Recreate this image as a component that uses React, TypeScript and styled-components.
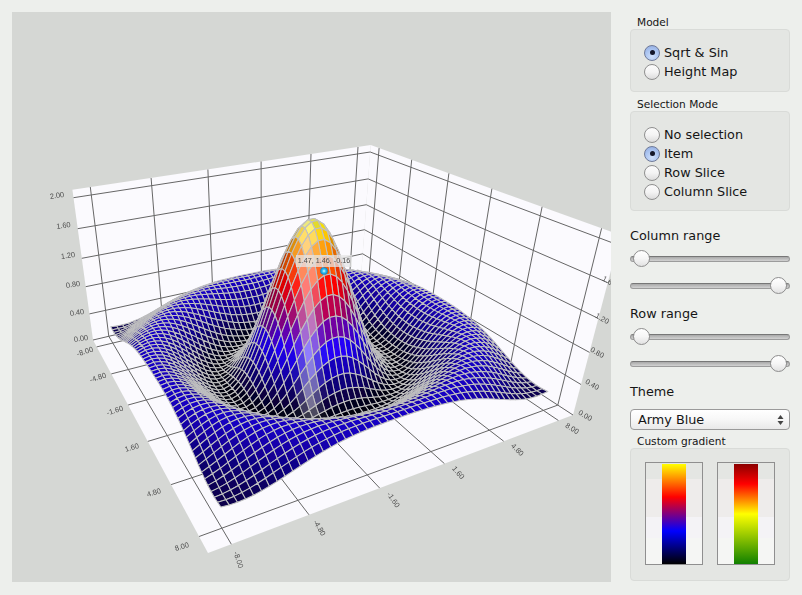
import * as React from 'react';
import styled, { createGlobalStyle } from 'styled-components';

const { useMemo } = React;

const GlobalStyle = createGlobalStyle`
  html, body {
    margin: 0;
    padding: 0;
    background: #edefec;
  }
  body {
    font-family: "DejaVu Sans", "Liberation Sans", sans-serif;
    color: #151515;
  }
`;

const Page = styled.div`
  width: 802px;
  height: 595px;
  box-sizing: border-box;
  padding: 12px 12px 13px 12px;
  display: flex;
  gap: 19px;
  background: #edefec;
  overflow: hidden;
`;

const ChartPanel = styled.div`
  width: 599px;
  height: 570px;
  background: #d5d7d4;
  overflow: hidden;
  svg {
    display: block;
  }
`;

const Side = styled.div`
  width: 160px;
  margin-top: 3px;
  display: flex;
  flex-direction: column;
`;

const GroupTitle = styled.div<{ $gap?: number }>`
  font-size: 10.6px;
  line-height: 14px;
  height: 14px;
  padding-left: 7px;
  margin-top: ${(p) => p.$gap ?? 0}px;
  white-space: nowrap;
`;

const GroupBox = styled.div<{ $height: number }>`
  height: ${(p) => p.$height}px;
  box-sizing: border-box;
  padding-top: 13px;
  background: #e4e6e3;
  border: 1px solid #d9dbd8;
  border-radius: 4px;
`;

const RadioRow = styled.div`
  height: 19px;
  padding-left: 13px;
  display: flex;
  align-items: center;
  gap: 4px;
  font-size: 12.8px;
  white-space: nowrap;
`;

const RadioDot = styled.span<{ $checked?: boolean }>`
  width: 16px;
  height: 16px;
  box-sizing: border-box;
  border-radius: 50%;
  display: flex;
  align-items: center;
  justify-content: center;
  border: 1px solid ${(p) => (p.$checked ? '#6f7a99' : '#8f8f8f')};
  background: ${(p) =>
    p.$checked
      ? 'radial-gradient(circle at 50% 75%, #cfe0fb 0%, #a9c3f0 55%, #8ea8dc 100%)'
      : 'linear-gradient(#fbfbfb 0%, #f4f4f4 50%, #dcdcdc 100%)'};
  &::after {
    content: '';
    display: ${(p) => (p.$checked ? 'block' : 'none')};
    width: 5px;
    height: 5px;
    border-radius: 50%;
    background: #14172a;
  }
`;

const SectionLabel = styled.div<{ $gap: number }>`
  font-size: 12.8px;
  line-height: 16px;
  height: 16px;
  margin-top: ${(p) => p.$gap}px;
  white-space: nowrap;
`;

const Slider = styled.div<{ $end?: boolean; $gap: number }>`
  position: relative;
  height: 16px;
  margin-top: ${(p) => p.$gap}px;
  padding: 0 3px;
  display: flex;
  justify-content: ${(p) => (p.$end ? 'flex-end' : 'flex-start')};
`;

const Track = styled.div`
  position: absolute;
  left: 0;
  right: 0;
  top: 5px;
  height: 6px;
  box-sizing: border-box;
  border-radius: 3px;
  border: 1px solid #9c9c9c;
  border-top-color: #777;
  background: linear-gradient(#a9a9a9, #d2d2d2);
`;

const Handle = styled.div`
  position: relative;
  width: 17px;
  height: 17px;
  margin-top: -1px;
  box-sizing: border-box;
  border-radius: 50%;
  border: 1px solid #8d8d8d;
  background: linear-gradient(#ffffff 0%, #f6f6f6 50%, #e2e2e2 100%);
`;

const Select = styled.div`
  height: 21px;
  margin-top: 9px;
  box-sizing: border-box;
  padding: 0 5px 0 7px;
  display: flex;
  align-items: center;
  justify-content: space-between;
  font-size: 12.8px;
  border: 1px solid #9a9a9a;
  border-radius: 4px;
  background: linear-gradient(#ffffff 0%, #f7f7f7 50%, #e9e9e9 100%);
`;

const GradientBox = styled.div`
  height: 133px;
  box-sizing: border-box;
  padding: 13px 14px;
  display: flex;
  gap: 14px;
  background: #e4e6e3;
  border: 1px solid #d9dbd8;
  border-radius: 4px;
`;

const Swatch = styled.div`
  width: 58px;
  height: 103px;
  box-sizing: border-box;
  padding-top: 1px;
  display: flex;
  justify-content: center;
  border: 1px solid #8f8f8f;
  background: linear-gradient(
    #e4e6e3 0,
    #e4e6e3 16px,
    #eeeceb 16px,
    #eeeceb 54px,
    #f4f3f6 54px,
    #f4f3f6 75px,
    #f5f6f4 75px
  );
`;

const SwatchBar = styled.div<{ $stops: string }>`
  width: 24px;
  height: 100px;
  background: linear-gradient(${(p) => p.$stops});
`;

const AxisLabel = styled.text`
  font-family: "Liberation Sans", sans-serif;
  font-size: 7.4px;
  fill: #4c4c4c;
  text-anchor: middle;
  dominant-baseline: middle;
`;

const TipText = styled.text`
  font-family: "Liberation Sans", sans-serif;
  font-size: 7.2px;
  fill: #4a4a4a;
  text-anchor: middle;
  dominant-baseline: middle;
`;

// plate corners on screen (back, right, front, left), data runs -8..8 inside +-M
const M = 8.9;
const corners = [
  [361, 277],
  [573, 415],
  [208, 553],
  [93, 340],
];
const VP = [264.4, 1589];
const K = -0.0435;

const den =
  (corners[1][0] - corners[2][0]) * (corners[3][1] - corners[2][1]) -
  (corners[3][0] - corners[2][0]) * (corners[1][1] - corners[2][1]);
const sx = corners[0][0] - corners[1][0] + corners[2][0] - corners[3][0];
const sy = corners[0][1] - corners[1][1] + corners[2][1] - corners[3][1];
const g =
  (sx * (corners[3][1] - corners[2][1]) - (corners[3][0] - corners[2][0]) * sy) / den;
const h =
  ((corners[1][0] - corners[2][0]) * sy - sx * (corners[1][1] - corners[2][1])) / den;

function homog(a: number, b: number, z: number) {
  const s = (a + M) / (2 * M);
  const t = (b + M) / (2 * M);
  const [p0, p1, , p3] = corners;
  const x = (p1[0] - p0[0] + g * p1[0]) * s + (p3[0] - p0[0] + h * p3[0]) * t + p0[0];
  const y = (p1[1] - p0[1] + g * p1[1]) * s + (p3[1] - p0[1] + h * p3[1]) * t + p0[1];
  const w = g * s + h * t + 1;
  const l = z * K;
  return [x + l * VP[0], y + l * VP[1], w + l];
}

function project(a: number, b: number, z: number) {
  const [x, y, w] = homog(a, b, z);
  return [x / w, y / w];
}

const pt = (p: number[]) => `${p[0].toFixed(1)} ${p[1].toFixed(1)}`;

function height(a: number, b: number) {
  const r = Math.sqrt(a * a + b * b) + 0.01;
  return (Math.sin(r) / r + 0.24) * 1.61;
}

const STOPS: [number, number[]][] = [
  [0, [0, 0, 0]],
  [0.33, [0, 0, 255]],
  [0.67, [255, 0, 0]],
  [1, [255, 255, 0]],
];

function gradientAt(v: number) {
  for (let i = 1; i < STOPS.length; i++) {
    if (v <= STOPS[i][0]) {
      const [p0, c0] = STOPS[i - 1];
      const [p1, c1] = STOPS[i];
      const f = (v - p0) / (p1 - p0);
      return c0.map((c, n) => c + (c1[n] - c) * f);
    }
  }
  return STOPS[3][1];
}

const LIGHT = [0.56, 0.23, 0.8];

function shade(a: number, b: number) {
  const e = 0.05;
  const dza = ((height(a + e, b) - height(a - e, b)) / (2 * e)) * 3.5;
  const dzb = ((height(a, b + e) - height(a, b - e)) / (2 * e)) * 3.5;
  const n = Math.hypot(dza, dzb, 1);
  const dot = Math.max(0, (-dza * LIGHT[0] - dzb * LIGHT[1] + LIGHT[2]) / n);
  const base = gradientAt(Math.max(0, Math.min(1, height(a, b) / 2)));
  const diffuse = 0.4 + 0.6 * Math.min(1, dot * 1.25) - (n < 1.3 ? 0.14 : 0);

  // the bright band running down the front of the peak
  const r = Math.hypot(a, b);
  const perp = a * 0.375 - b * 0.927 + 0.3;
  const along = a * 0.927 + b * 0.375;
  const fade = Math.max(0, Math.min(1, (4.7 - r) / 1.2));
  const band = along > -0.6 ? Math.exp(-((perp / 0.42) ** 2)) * fade * 0.5 : 0;

  const tint = (c: number) => {
    const lit = c * diffuse;
    return Math.round(Math.min(255, lit + (255 - lit) * band));
  };
  return `rgb(${tint(base[0] + base[2] * 0.12)},${tint(base[1])},${tint(base[2])})`;
}

const TICKS = [-8, -4.8, -1.6, 1.6, 4.8, 8];
const LEVELS = [0, 0.4, 0.8, 1.2, 1.6, 2];
const WALL_TOP = 2.1;
const SAMPLES = 50;

const labels: [string, number, number, number][] = [
  ['2.00', 57, 196, -8],
  ['1.60', 63.5, 226, -8],
  ['1.20', 68, 256, -8],
  ['0.80', 73, 285, -8],
  ['0.40', 77, 313, -8],
  ['0.00', 81, 339, -8],
  ['-8.00', 85, 352, -18],
  ['-4.80', 98, 378, -18],
  ['-1.60', 115, 411, -18],
  ['1.60', 132, 448, -18],
  ['4.80', 154, 493, -18],
  ['8.00', 182, 547, -18],
  ['-8.00', 238, 560, 72],
  ['-4.80', 319, 528, 60],
  ['-1.60', 393, 500, 55],
  ['1.60', 458, 473, 50],
  ['4.80', 517, 450, 45],
  ['8.00', 572, 429, 32],
  ['0.00', 585, 416, 30],
  ['0.40', 592, 385, 30],
  ['0.80', 597, 353, 30],
  ['1.20', 602, 319, 30],
  ['1.60', 609, 282, 30],
];

const SurfaceChart: React.FC = () => {
  const quads = useMemo(() => {
    const step = 16 / (SAMPLES - 1);
    const list: { d: string; fill: string; depth: number }[] = [];
    for (let i = 0; i < SAMPLES - 1; i++) {
      for (let j = 0; j < SAMPLES - 1; j++) {
        const a0 = -8 + i * step;
        const b0 = -8 + j * step;
        const a1 = a0 + step;
        const b1 = b0 + step;
        const ca = a0 + step / 2;
        const cb = b0 + step / 2;
        const d = [
          project(a0, b0, height(a0, b0)),
          project(a1, b0, height(a1, b0)),
          project(a1, b1, height(a1, b1)),
          project(a0, b1, height(a0, b1)),
        ];
        list.push({
          d: `M${d.map(pt).join('L')}Z`,
          fill: shade(ca, cb),
          depth: homog(ca, cb, 0)[2],
        });
      }
    }
    return list.sort((x, y) => y.depth - x.depth);
  }, []);

  const line = (p: number[], q: number[]) => `M${pt(p)}L${pt(q)}`;
  const poly = (pts: number[][]) => `M${pts.map(pt).join('L')}Z`;

  const grid = [
    ...TICKS.map((t) => line(project(t, -M, 0), project(t, M, 0))),
    ...TICKS.map((t) => line(project(-M, t, 0), project(M, t, 0))),
    ...TICKS.map((t) => line(project(-M, t, 0), project(-M, t, WALL_TOP))),
    ...TICKS.map((t) => line(project(t, -M, 0), project(t, -M, WALL_TOP))),
    ...LEVELS.map((z) => line(project(-M, -M, z), project(-M, M, z))),
    ...LEVELS.map((z) => line(project(-M, -M, z), project(M, -M, z))),
  ].join('');

  return (
    <svg width="599" height="570" viewBox="12 12 599 570">
      <defs>
        <filter id="soft" x="-5%" y="-5%" width="110%" height="110%">
          <feGaussianBlur stdDeviation="0.3" />
        </filter>
        <filter id="softer" x="-20%" y="-20%" width="140%" height="140%">
          <feGaussianBlur stdDeviation="0.4" />
        </filter>
        <radialGradient id="marker">
          <stop offset="0%" stopColor="#e8fbff" />
          <stop offset="45%" stopColor="#35c4f5" />
          <stop offset="100%" stopColor="#0a7fc4" />
        </radialGradient>
      </defs>
      <g filter="url(#soft)">
        <g fill="#fbfafe">
          <path d={poly([project(-M, -M, 0), project(-M, M, 0), project(-M, M, WALL_TOP), project(-M, -M, WALL_TOP)])} />
          <path d={poly([project(-M, -M, 0), project(M, -M, 0), project(M, -M, WALL_TOP), project(-M, -M, WALL_TOP)])} />
          <path d={poly([project(-M, -M, 0), project(M, -M, 0), project(M, M, 0), project(-M, M, 0)])} />
        </g>
        <path d={grid} fill="none" stroke="#666" strokeWidth="1" />
        <g stroke="#c0c0c0" strokeWidth="1.05" strokeLinejoin="round">
          {quads.map((q, i) => (
            <path key={i} d={q.d} fill={q.fill} />
          ))}
        </g>
      </g>
      <g filter="url(#softer)">
        {labels.map(([text, x, y, rot], i) => (
          <AxisLabel key={i} x={x} y={y} transform={`rotate(${rot} ${x} ${y})`}>
            {text}
          </AxisLabel>
        ))}
      </g>
      <rect x="296" y="255" width="56" height="12" fill="#e6e6e6" fillOpacity="0.75" />
      <g filter="url(#soft)">
        <TipText x="324" y="261">1.47, 1.46, -0.16</TipText>
      </g>
      <circle cx="324" cy="271" r="3.8" fill="url(#marker)" />
    </svg>
  );
};

const Arrows: React.FC = () => (
  <svg width="7" height="12" viewBox="0 0 7 12">
    <path d="M3.5 1 L6.5 5 L0.5 5 Z" fill="#444" />
    <path d="M3.5 11 L6.5 7 L0.5 7 Z" fill="#444" />
  </svg>
);

const RangeSlider: React.FC<{ end?: boolean; gap: number }> = ({ end, gap }) => (
  <Slider $end={end} $gap={gap}>
    <Track />
    <Handle />
  </Slider>
);

const Radio: React.FC<{ label: string; checked?: boolean }> = ({ label, checked }) => (
  <RadioRow>
    <RadioDot $checked={checked} />
    {label}
  </RadioRow>
);

const App: React.FC = () => (
  <Page>
    <GlobalStyle />
    <ChartPanel>
      <SurfaceChart />
    </ChartPanel>
    <Side>
      <GroupTitle>Model</GroupTitle>
      <GroupBox $height={63}>
        <Radio label="Sqrt & Sin" checked />
        <Radio label="Height Map" />
      </GroupBox>
      <GroupTitle $gap={5}>Selection Mode</GroupTitle>
      <GroupBox $height={100}>
        <Radio label="No selection" />
        <Radio label="Item" checked />
        <Radio label="Row Slice" />
        <Radio label="Column Slice" />
      </GroupBox>
      <SectionLabel $gap={17}>Column range</SectionLabel>
      <RangeSlider gap={7} />
      <RangeSlider gap={11} end />
      <SectionLabel $gap={12}>Row range</SectionLabel>
      <RangeSlider gap={7} />
      <RangeSlider gap={11} end />
      <SectionLabel $gap={12}>Theme</SectionLabel>
      <Select>
        Army Blue
        <Arrows />
      </Select>
      <GroupTitle $gap={4}>Custom gradient</GroupTitle>
      <GradientBox>
        <Swatch>
          <SwatchBar $stops="#ffff00 0%, #ff0000 33%, #0000ff 67%, #000000 100%" />
        </Swatch>
        <Swatch>
          <SwatchBar $stops="#8b0000 0%, #ff0000 20%, #ffff00 50%, #108000 100%" />
        </Swatch>
      </GradientBox>
    </Side>
  </Page>
);

export default App;
